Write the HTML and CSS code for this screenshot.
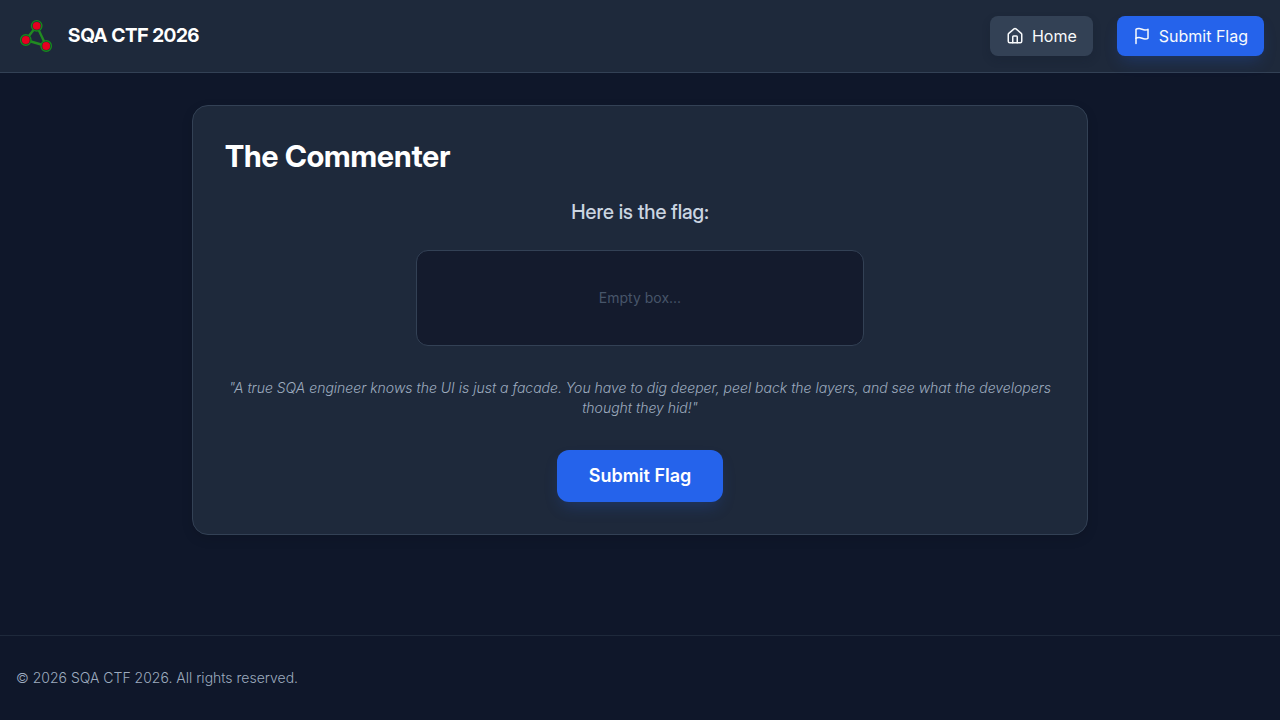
FILE: index.html
```html
<!DOCTYPE html>
<html lang="en">
<head>
<meta charset="utf-8">
<meta name="viewport" content="width=device-width, initial-scale=1">
<title>SQA CTF 2026</title>
<link rel="stylesheet" href="styles.css">
</head>
<body>
<header class="topbar">
  <a class="brand" href="#">
    <svg class="brand-logo" viewBox="0 0 40 40" aria-hidden="true">
      <path d="M20.7 9.8 L9.8 24 L30.2 30 Z" fill="none" stroke="#228b22" stroke-width="2.4"/>
      <g fill="#1e293b" stroke="#168a1c" stroke-width="1.4">
        <circle cx="20.7" cy="9.8" r="5.2"/>
        <circle cx="9.8" cy="24" r="5.2"/>
        <circle cx="30.2" cy="30" r="5.2"/>
      </g>
      <g fill="#e6001f">
        <circle cx="20.7" cy="9.8" r="3.9"/>
        <circle cx="9.8" cy="24" r="3.9"/>
        <circle cx="30.2" cy="30" r="3.9"/>
      </g>
    </svg>
    <span>SQA CTF 2026</span>
  </a>
  <nav class="nav">
    <a class="nav-link" href="#">
      <svg class="icon" viewBox="0 0 24 24" aria-hidden="true"><path d="M15 21v-8a1 1 0 0 0-1-1h-4a1 1 0 0 0-1 1v8"/><path d="M3 10a2 2 0 0 1 .709-1.528l7-5.999a2 2 0 0 1 2.582 0l7 5.999A2 2 0 0 1 21 10v9a2 2 0 0 1-2 2H5a2 2 0 0 1-2-2z"/></svg>
      Home
    </a>
    <a class="nav-link nav-link-primary" href="#">
      <svg class="icon" viewBox="0 0 24 24" aria-hidden="true"><path d="M4 15s1-1 4-1 5 2 8 2 4-1 4-1V3s-1 1-4 1-5-2-8-2-4 1-4 1z"/><path d="M4 22v-7"/></svg>
      Submit Flag
    </a>
  </nav>
</header>
<main class="main">
  <section class="card">
    <h1 class="title">The Commenter</h1>
    <div class="challenge">
      <p class="lead">Here is the flag:</p>
      <div class="flag-box">Empty box...</div>
      <p class="hint">"A true SQA engineer knows the UI is just a facade. You have to dig deeper, peel back the layers, and see what the developers thought they hid!"</p>
      <button class="submit" type="button">Submit Flag</button>
    </div>
  </section>
</main>
<footer class="footer">
  <p>© 2026 SQA CTF 2026. All rights reserved.</p>
</footer>
</body>
</html>
```

FILE: styles.css
```css
* {
  box-sizing: border-box;
  margin: 0;
}

body {
  display: flex;
  flex-direction: column;
  min-height: 100vh;
  background: #0f172a;
  color: #f1f5f9;
  font-family: Inter, "Liberation Sans", sans-serif;
  font-size: 16px;
  line-height: 24px;
}

.topbar {
  display: flex;
  align-items: center;
  justify-content: space-between;
  padding: 16px;
  background: #1e293b;
  border-bottom: 1px solid #334155;
}

.brand {
  display: flex;
  align-items: center;
  gap: 12px;
  color: #ffffff;
  font-family: "Inter Display", Inter, "Liberation Sans", sans-serif;
  font-size: 19px;
  font-weight: 700;
  line-height: 28px;
  text-decoration: none;
}

.brand-logo {
  width: 40px;
  height: 40px;
}

.nav {
  display: flex;
  gap: 24px;
}

.nav-link {
  display: flex;
  align-items: center;
  gap: 8px;
  padding: 8px 16px;
  border-radius: 8px;
  background: #334155;
  color: #f8fafc;
  font-weight: 400;
  text-decoration: none;
  box-shadow: 0 4px 8px rgba(15, 23, 42, 0.2);
}

.nav-link-primary {
  background: #2563eb;
  box-shadow: 0 8px 16px -4px rgba(37, 99, 235, 0.25);
}

.icon {
  width: 18px;
  height: 18px;
  fill: none;
  stroke: currentColor;
  stroke-width: 2;
  stroke-linecap: round;
  stroke-linejoin: round;
}

.main {
  flex: 1;
  width: 100%;
  max-width: 928px;
  margin: 0 auto;
  padding: 32px 16px;
}

.card {
  padding: 32px;
  background: #1e293b;
  border: 1px solid #334155;
  border-radius: 16px;
  box-shadow: 0 4px 12px rgba(0, 0, 0, 0.12);
}

.title {
  margin-bottom: 24px;
  color: #ffffff;
  font-family: "Inter Display", Inter, "Liberation Sans", sans-serif;
  font-size: 30px;
  font-weight: 700;
  line-height: 36px;
}

.challenge {
  display: flex;
  flex-direction: column;
  align-items: center;
  text-align: center;
}

.lead {
  margin-bottom: 24px;
  color: #cbd5e1;
  font-family: "Inter Display", Inter, "Liberation Sans", sans-serif;
  font-size: 20px;
  font-weight: 500;
  line-height: 28px;
}

.flag-box {
  display: flex;
  align-items: center;
  justify-content: center;
  width: 100%;
  max-width: 448px;
  min-height: 96px;
  margin-bottom: 32px;
  background: #141b2d;
  border: 1px solid #334155;
  border-radius: 12px;
  color: #475569;
  font-size: 14px;
  line-height: 20px;
}

.hint {
  margin-bottom: 32px;
  color: #9dabbf;
  font-size: 14px;
  font-style: italic;
  font-weight: 300;
  line-height: 20px;
}

.submit {
  padding: 12px 32px;
  border: 0;
  border-radius: 12px;
  background: #2563eb;
  color: #ffffff;
  font-family: inherit;
  font-size: 18px;
  font-weight: 600;
  line-height: 28px;
  box-shadow: 0 8px 16px -4px rgba(37, 99, 235, 0.25);
  cursor: pointer;
}

.footer {
  padding: 32px 16px;
  border-top: 1px solid #1e293b;
  color: #9dabbf;
  font-size: 14px;
  font-weight: 300;
  line-height: 20px;
}
```
